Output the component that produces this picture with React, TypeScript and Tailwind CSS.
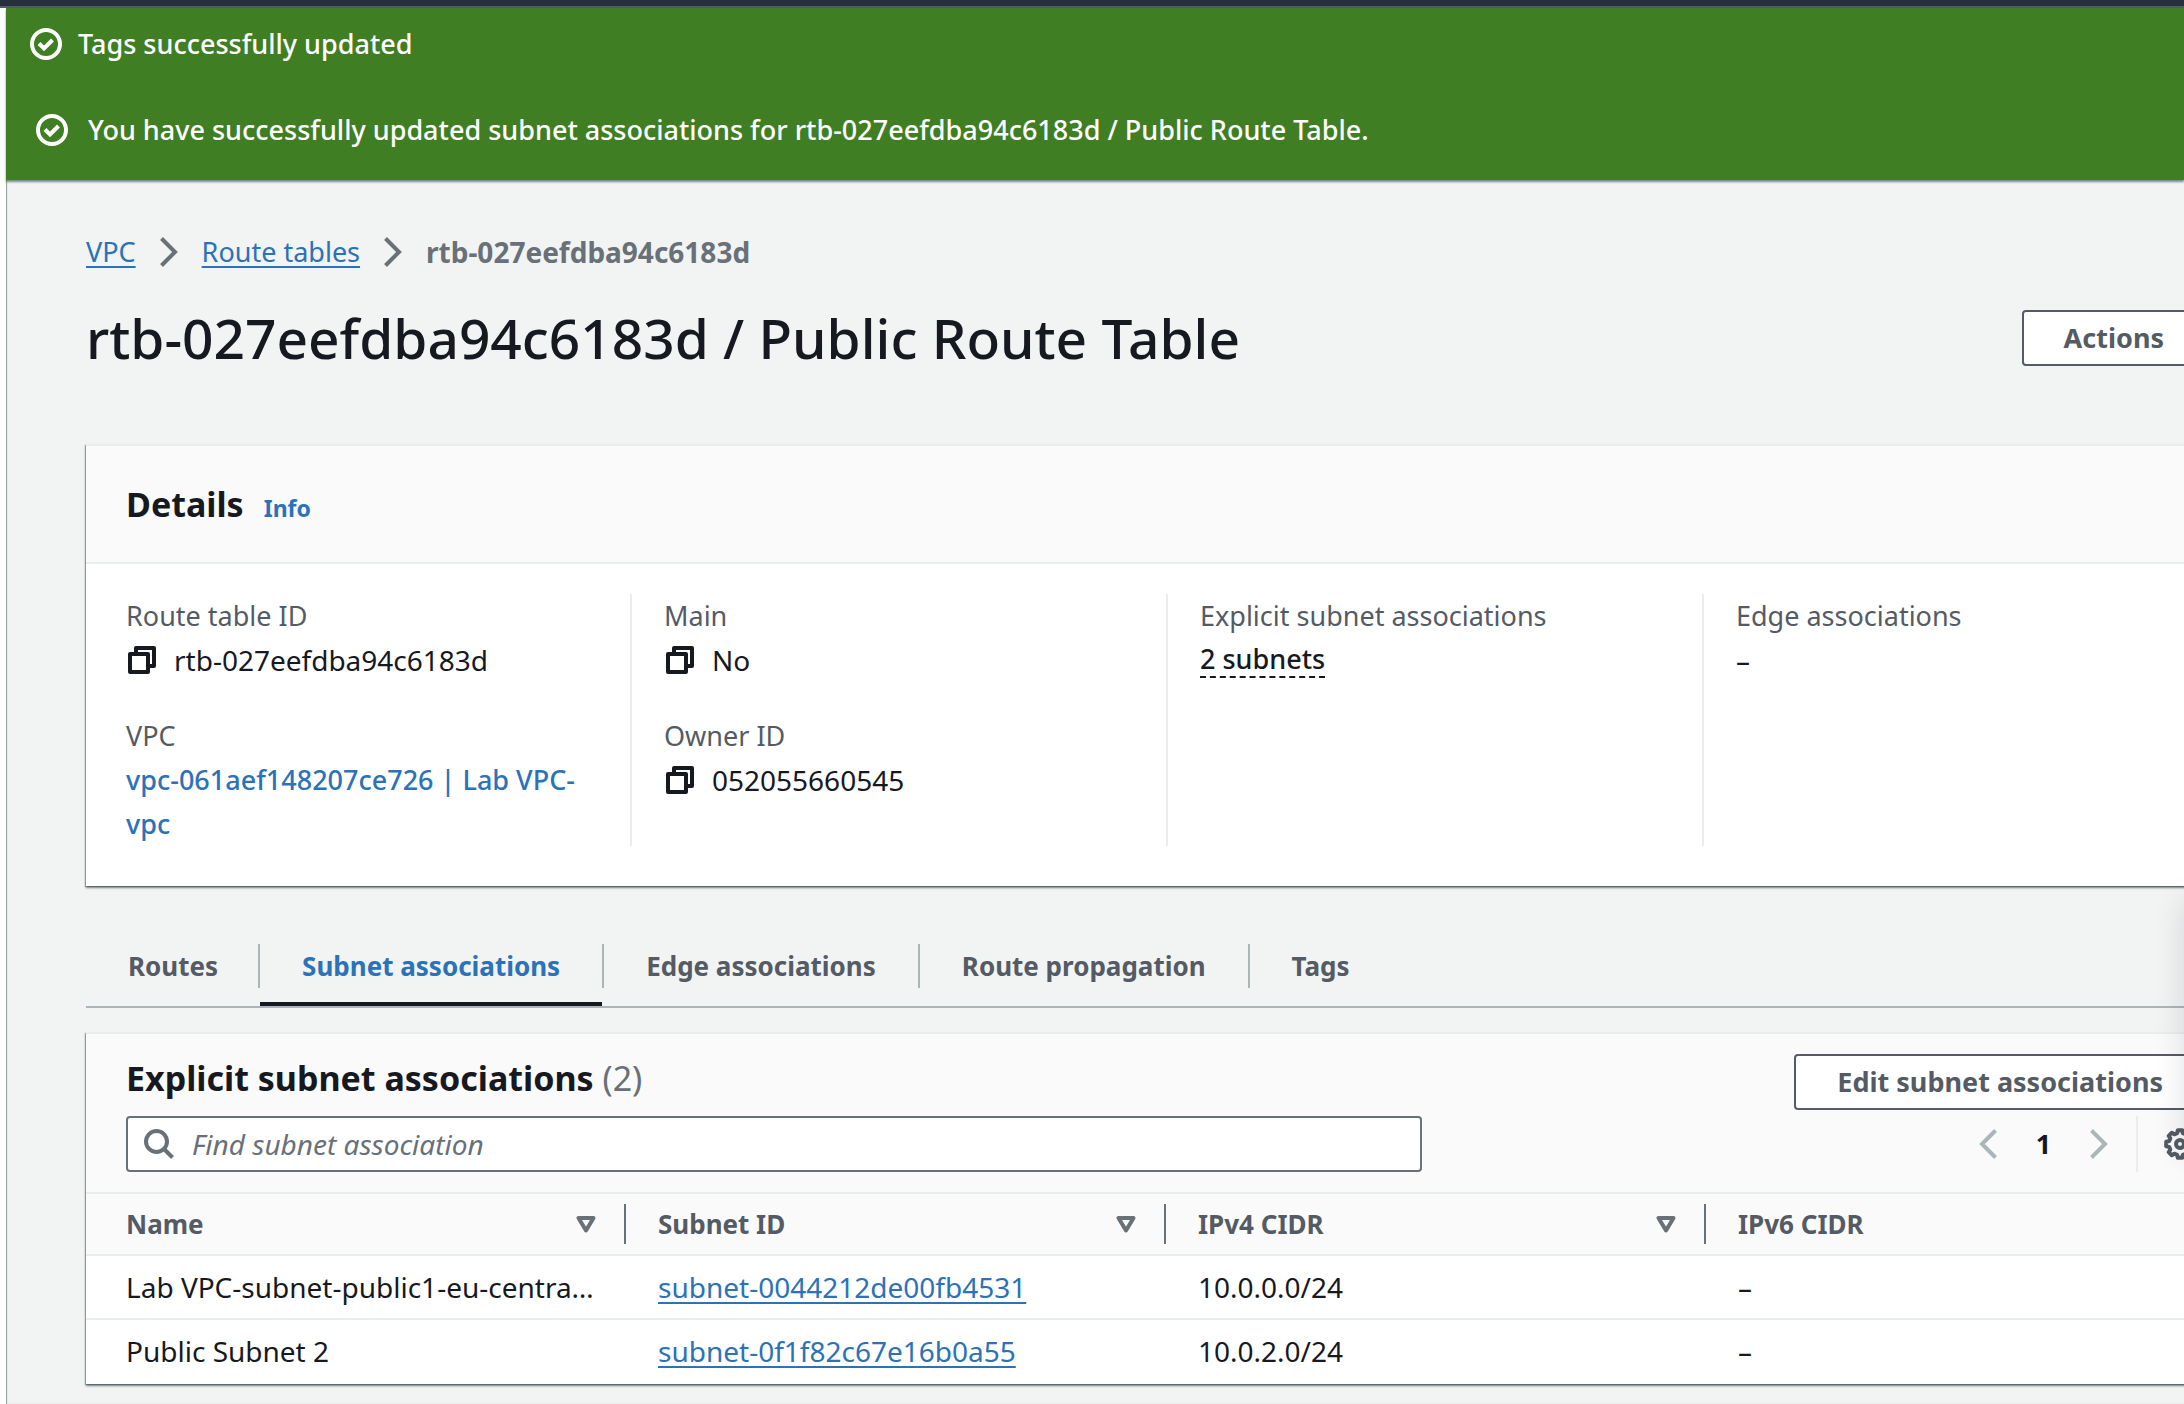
import type { ReactNode } from "react";

function SuccessIcon() {
  return (
    <svg className="size-8 shrink-0" viewBox="0 0 32 32" fill="none" stroke="currentColor" strokeWidth="4" aria-hidden="true">
      <circle cx="16" cy="16" r="14" />
      <path d="M9 15.500l5 5 8.500-8.500" />
    </svg>
  );
}

function ChevronIcon({ flip = false }: { flip?: boolean }) {
  return (
    <svg
      className="h-[30px] w-[18px] shrink-0"
      viewBox="0 0 18 30"
      fill="none"
      stroke="currentColor"
      strokeWidth="4"
      aria-hidden="true"
    >
      <path d={flip ? "M16.500 1.500L3 15l13.500 13.500" : "M1.500 1.500L15 15 1.500 28.500"} />
    </svg>
  );
}

function CopyIcon() {
  return (
    <svg className="size-8" viewBox="0 0 32 32" fill="none" stroke="currentColor" strokeWidth="4" strokeLinejoin="round" aria-hidden="true">
      <path d="M4 10h18v18H4z" />
      <path d="M10 10V4h18v18h-6" />
    </svg>
  );
}

function SortIcon() {
  return (
    <svg className="h-[18px] w-5" viewBox="0 0 20 18" fill="none" stroke="currentColor" strokeWidth="4" strokeLinejoin="round" aria-hidden="true">
      <path d="M2.500 3h15L10 15.500z" />
    </svg>
  );
}

const gearPoints = Array.from({ length: 8 }, (_, i) =>
  [
    [-15, 11.2],
    [-9, 14],
    [9, 14],
    [15, 11.2],
  ].map(([offset, radius]) => {
    const a = ((i * 45 + offset) * Math.PI) / 180;
    return `${(16 + radius * Math.sin(a)).toFixed(1)},${(16 - radius * Math.cos(a)).toFixed(1)}`;
  })
)
  .flat()
  .join(" ");

function GearIcon() {
  return (
    <svg className="size-8" viewBox="0 0 32 32" fill="none" stroke="currentColor" strokeWidth="4" strokeLinejoin="round" aria-hidden="true">
      <polygon points={gearPoints} />
      <circle cx="16" cy="16" r="4" />
    </svg>
  );
}

function Field({ label, copy = false, children }: { label: string; copy?: boolean; children: ReactNode }) {
  return (
    <div>
      <dt className="text-[#545b64]">{label}</dt>
      <dd className="flex items-center gap-4 text-[28px]">
        {copy && (
          <button type="button" aria-label={`Copy ${label}`}>
            <CopyIcon />
          </button>
        )}
        {children}
      </dd>
    </div>
  );
}

const tabs = ["Routes", "Subnet associations", "Edge associations", "Route propagation", "Tags"];
const columns = ["Name", "Subnet ID", "IPv4 CIDR", "IPv6 CIDR"];
const rows = [
  { name: "Lab VPC-subnet-public1-eu-centra…", id: "subnet-0044212de00fb4531", ipv4: "10.0.0.0/24", ipv6: "–" },
  { name: "Public Subnet 2", id: "subnet-0f1f82c67e16b0a55", ipv4: "10.0.2.0/24", ipv6: "–" },
];

export default function App() {
  return (
    <div className="relative flex min-h-screen flex-col overflow-hidden bg-[#f2f3f3] font-['Noto_Sans',sans-serif] text-[27px] leading-9 text-[#16191f]">
      <div className="h-2 border-b-2 border-[#545b64] bg-[#252f3e]" />
      <div className="flex grow">
        <div className="w-1.5 shrink-0 bg-white" />
        <main className="min-w-0 grow shadow-[inset_1px_0_1px_0_rgba(0,28,36,0.4)]">
          <div className="relative bg-[#3f7e23] font-medium text-white shadow-[0_2px_2px_0_rgba(0,28,36,0.5)]">
            <div role="status" className="flex h-[72px] items-center gap-4 pl-6">
              <SuccessIcon />
              Tags successfully updated
            </div>
            <div role="status" className="flex h-[100px] items-center gap-5 pl-[30px]">
              <SuccessIcon />
              You have successfully updated subnet associations for rtb-027eefdba94c6183d / Public Route Table.
            </div>
          </div>

          <div className="-mr-[62px] pt-[54px] pl-20">
            <nav aria-label="Breadcrumb" className="flex items-center gap-6 text-[#687078]">
              <a href="#vpc" className="text-[#2b72b8] underline decoration-2 underline-offset-4">VPC</a>
              <ChevronIcon />
              <a href="#route-tables" className="text-[#2b72b8] underline decoration-2 underline-offset-4">Route tables</a>
              <ChevronIcon />
              <span className="text-[28px] font-bold">rtb-027eefdba94c6183d</span>
            </nav>

            <div className="mt-10 flex h-14 items-center justify-between">
              <h1 className="text-[55px] leading-14 font-medium">rtb-027eefdba94c6183d / Public Route Table</h1>
              <button type="button" className="flex h-14 items-center gap-5 rounded-sm border-2 border-[#545b64] bg-white px-10 font-bold text-[#545b64]">
                Actions
                <svg className="h-2.5 w-5" viewBox="0 0 20 10" fill="currentColor" aria-hidden="true">
                  <path d="M0 0h20L10 10z" />
                </svg>
              </button>
            </div>

            <section className="mt-[78px] border-t-2 border-[#eaeded] bg-white shadow-[0_2px_2px_0_rgba(0,28,36,0.5),-1px_1px_1px_0_rgba(0,28,36,0.3)]">
              <div className="flex h-[118px] items-center border-b-2 border-[#eaeded] bg-[#fafafa] px-10 pt-1">
                <div className="flex items-baseline gap-5">
                  <h2 className="text-[34px] font-bold">Details</h2>
                  <a href="#info" className="text-[23px] font-bold text-[#2b72b8]">Info</a>
                </div>
              </div>
              <div className="grid grid-cols-4 pt-[30px] pr-1.5 pb-10 pl-2.5 leading-11">
                <dl className="flex flex-col gap-8 border-r-2 border-[#eaeded] pr-8 pl-[30px]">
                  <Field label="Route table ID" copy>rtb-027eefdba94c6183d</Field>
                  <Field label="VPC">
                    <a href="#vpc-details" className="text-[27px] font-medium text-[#2b72b8]">vpc-061aef148207ce726 | Lab VPC-vpc</a>
                  </Field>
                </dl>
                <dl className="flex flex-col gap-8 border-r-2 border-[#eaeded] px-8">
                  <Field label="Main" copy>No</Field>
                  <Field label="Owner ID" copy>052055660545</Field>
                </dl>
                <dl className="border-r-2 border-[#eaeded] px-8">
                  <Field label="Explicit subnet associations">
                    <button type="button" className="my-1 border-b-2 border-dashed border-[#16191f] text-[27px] leading-[34px] font-medium">2 subnets</button>
                  </Field>
                </dl>
                <dl className="px-8">
                  <Field label="Edge associations">–</Field>
                </dl>
              </div>
            </section>

            <div role="tablist" className="mt-[58px] flex h-16 border-b-2 border-[#aab7b8] text-[26px] font-bold text-[#545b64]">
              {tabs.map((tab, i) => (
                <div key={tab} className="flex">
                  {i > 0 && <div className="h-11 w-0.5 bg-[#aab7b8]" />}
                  <button
                    type="button"
                    role="tab"
                    aria-selected={i === 1}
                    className={`border-b-4 border-transparent pb-3.5 pl-[42px] aria-selected:border-[#16191f] aria-selected:text-[#2b72b8] ${i === 0 ? "pr-10" : "pr-[42px]"}`}
                  >
                    {tab}
                  </button>
                </div>
              ))}
            </div>

            <section className="mt-6 border-t-2 border-[#eaeded] bg-white shadow-[0_2px_2px_0_rgba(0,28,36,0.5),-1px_1px_1px_0_rgba(0,28,36,0.3)]">
              <div className="border-b-2 border-[#eaeded] bg-[#fafafa] px-10 py-5">
                <div className="flex justify-between">
                  <h2 className="text-[34px] leading-12 font-bold">
                    Explicit subnet associations <span className="font-normal text-[#687078]">(2)</span>
                  </h2>
                  <button type="button" className="h-14 rounded-sm border-2 border-[#545b64] bg-white px-[41px] font-bold text-[#545b64]">
                    Edit subnet associations
                  </button>
                </div>
                <div className="mt-1.5 flex items-center justify-between">
                  <label className="flex h-14 w-3/5 max-w-[1296px] grow items-center gap-[18px] rounded-sm border-2 border-[#687078] bg-white pl-4 text-[#687078]">
                    <svg className="size-[30px] shrink-0" viewBox="0 0 30 30" fill="none" stroke="currentColor" strokeWidth="4" aria-hidden="true">
                      <circle cx="12.500" cy="12.500" r="10.500" />
                      <path d="M20 20l8.500 8.500" />
                    </svg>
                    <input
                      type="text"
                      aria-label="Find subnet association"
                      placeholder="Find subnet association"
                      className="h-full grow text-[28px] outline-none placeholder:text-[#687078] placeholder:italic"
                    />
                  </label>
                  <div className="flex items-center text-[#aab7b8]">
                    <button type="button" aria-label="Previous page"><ChevronIcon flip /></button>
                    <button type="button" aria-current="page" className="w-[93px] font-bold text-[#16191f]">1</button>
                    <button type="button" aria-label="Next page"><ChevronIcon /></button>
                    <div className="ml-7 h-14 w-0.5 bg-[#eaeded]" />
                    <button type="button" aria-label="Preferences" className="mr-2.5 ml-[26px] text-[#545b64]"><GearIcon /></button>
                  </div>
                </div>
              </div>
              <table className="w-full table-fixed border-separate border-spacing-0 text-left">
                <thead>
                  <tr className="bg-[#fafafa] text-[26px] text-[#545b64]">
                    {columns.map((column, i) => (
                      <th key={column} scope="col" className="h-[62px] border-b-2 border-[#eaeded] p-0 font-bold">
                        <div className={`flex h-10 items-center justify-between pr-7 ${i === 0 ? "pl-10" : "pl-8"} ${i < 3 ? "border-r-2 border-[#687078]" : ""}`}>
                          {column}
                          <button type="button" aria-label={`Sort by ${column}`} className="text-[#687078]"><SortIcon /></button>
                        </div>
                      </th>
                    ))}
                  </tr>
                </thead>
                <tbody className="text-[28px] [&>tr:last-child>td]:border-transparent">
                  {rows.map((row) => (
                    <tr key={row.id}>
                      <td className="h-16 truncate border-b-2 border-[#eaeded] p-0 pl-10">{row.name}</td>
                      <td className="h-16 border-b-2 border-[#eaeded] p-0 pl-8">
                        <a href={`#${row.id}`} className="text-[#2b72b8] underline decoration-2 underline-offset-4">{row.id}</a>
                      </td>
                      <td className="h-16 border-b-2 border-[#eaeded] p-0 pl-8">{row.ipv4}</td>
                      <td className="h-16 border-b-2 border-[#eaeded] p-0 pl-8">{row.ipv6}</td>
                    </tr>
                  ))}
                </tbody>
              </table>
            </section>
          </div>
        </main>
      </div>
      <div className="pointer-events-none absolute top-[900px] -right-10 h-64 w-10 shadow-[0_0_32px_0_rgba(0,28,36,0.13)]" />
    </div>
  );
}
